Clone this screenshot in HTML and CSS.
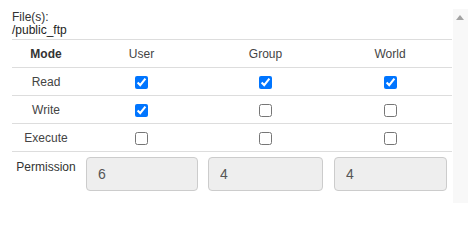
FILE: index.html
```html
<!DOCTYPE html>
<html>
<head>
<meta charset="utf-8">
<link rel="stylesheet" href="styles.css">
</head>
<body>
<div class="wrap">
  <div class="content">
    <div class="files">
      <div class="files-label">File(s):</div>
      <div class="files-path">/public_ftp</div>
    </div>
    <table class="perm-table">
      <tr>
        <th class="mode-col">Mode</th>
        <td>User</td>
        <td>Group</td>
        <td>World</td>
      </tr>
      <tr>
        <td class="mode-col">Read</td>
        <td><input type="checkbox" checked></td>
        <td><input type="checkbox" checked></td>
        <td><input type="checkbox" checked></td>
      </tr>
      <tr>
        <td class="mode-col">Write</td>
        <td><input type="checkbox" checked></td>
        <td><input type="checkbox"></td>
        <td><input type="checkbox"></td>
      </tr>
      <tr class="last">
        <td class="mode-col">Execute</td>
        <td><input type="checkbox"></td>
        <td><input type="checkbox"></td>
        <td><input type="checkbox"></td>
      </tr>
    </table>
    <div class="perm-row">
      <div class="perm-label">Permission</div>
      <div class="perm-inputs">
        <input class="perm-input in-user" type="text" value="6" readonly>
        <input class="perm-input in-group" type="text" value="4" readonly>
        <input class="perm-input in-world" type="text" value="4" readonly>
      </div>
    </div>
  </div>
  <div class="scrollbar">
    <div class="arrow-up"></div>
  </div>
</div>
</body>
</html>
```
FILE: styles.css
```css
html, body {
  margin: 0;
  padding: 0;
  background: #ffffff;
}
body {
  font-family: "Liberation Sans", Arial, sans-serif;
  font-size: 12px;
  color: #333333;
  width: 475px;
  height: 203px;
  overflow: hidden;
}
.wrap {
  display: flex;
  padding-top: 9px;
  height: 194px;
}
.content {
  width: 440px;
  padding-left: 12px;
  padding-right: 1px;
}
.files {
  padding-top: 2px;
  line-height: 13px;
  color: #222222;
}
.files-label {
  color: #333333;
}
.perm-table {
  margin-top: 2px;
  width: 440px;
  border-collapse: collapse;
  table-layout: fixed;
}
.perm-table th,
.perm-table td {
  height: 27px;
  padding: 0;
  border-top: 1px solid #dddddd;
  text-align: center;
  vertical-align: middle;
  color: #444444;
  font-weight: normal;
}
.perm-table tr.last td {
  border-bottom: 1px solid #dddddd;
}
.perm-table th.mode-col {
  font-weight: bold;
  color: #333333;
}
.perm-table .mode-col {
  width: 68px;
}
.perm-table td:nth-child(2) {
  width: 123px;
}
.perm-table td:nth-child(3) {
  width: 125px;
}
.perm-table input[type="checkbox"] {
  margin: 0;
  width: 13px;
  height: 13px;
  vertical-align: middle;
}
.perm-row {
  display: flex;
  margin-top: 5px;
}
.perm-label {
  width: 68px;
  text-align: center;
  padding-top: 3px;
  color: #333333;
  flex: none;
}
.perm-inputs {
  display: flex;
  margin-left: 6px;
}
.perm-input {
  box-sizing: border-box;
  height: 34px;
  padding: 0 11px;
  border: 1px solid #cccccc;
  border-radius: 4px;
  background: #eeeeee;
  color: #555555;
  font-family: "Liberation Sans", Arial, sans-serif;
  font-size: 14px;
  outline: none;
  margin: 0;
}
.in-user {
  width: 112px;
}
.in-group {
  width: 115px;
  margin-left: 10px;
}
.in-world {
  width: 113px;
  margin-left: 11px;
}
.scrollbar {
  width: 15px;
  height: 194px;
  background: #f8f8f8;
  position: relative;
}
.arrow-up {
  position: absolute;
  left: 3px;
  top: 6px;
  width: 0;
  height: 0;
  border-left: 4.5px solid transparent;
  border-right: 4.5px solid transparent;
  border-bottom: 5px solid #a3a3a3;
}
```
